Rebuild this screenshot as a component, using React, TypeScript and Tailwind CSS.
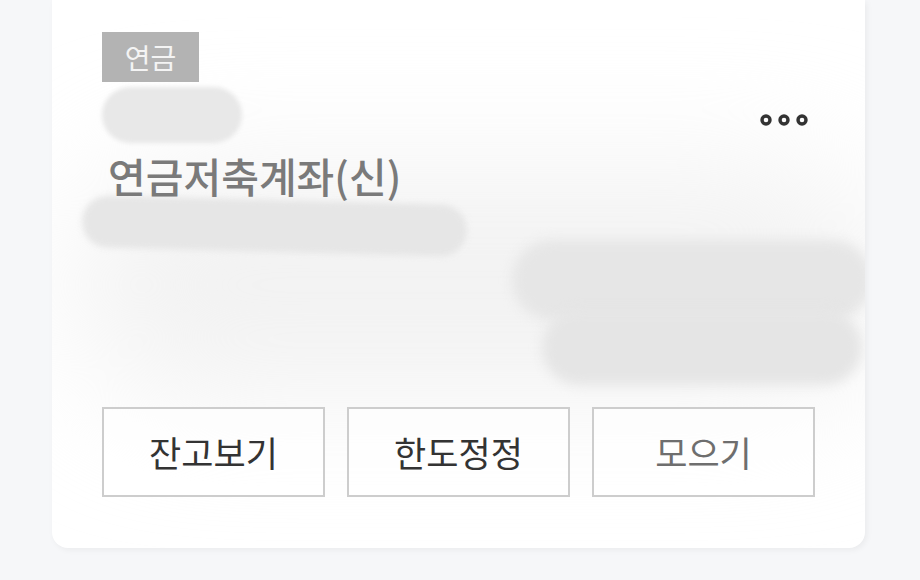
const KR = "font-['Noto_Sans_CJK_KR','Noto_Sans',sans-serif]";

function MoreDots() {
  return (
    <svg width="50" height="14" viewBox="0 0 50 14" aria-hidden>
      {[7, 25, 43].map((cx) => (
        <circle key={cx} cx={cx} cy="7" r="4" fill="none" stroke="#333" strokeWidth="3.4" />
      ))}
    </svg>
  );
}

const actions = [
  { label: "잔고보기", muted: false },
  { label: "한도정정", muted: false },
  { label: "모으기", muted: true },
];

export default function App() {
  return (
    <div className={`h-[580px] w-[920px] overflow-hidden bg-[#f6f7f9] ${KR}`}>
      <div className="relative ml-[52px] flex h-[548px] w-[813px] flex-col overflow-hidden rounded-b-[16px] bg-white px-[50px] pb-[51px] shadow-[2px_2px_6px_rgba(0,0,0,0.05)]">
        {/* soft redaction haze */}
        <div className="pointer-events-none absolute left-[20px] top-[170px] h-[230px] w-[820px] rounded-full bg-[#f2f2f2] blur-3xl" />
        <div className="pointer-events-none absolute left-[30px] top-[200px] h-[52px] w-[385px] rotate-[1.5deg] rounded-full bg-[#e6e6e6] blur-[3px]" />
        <div className="pointer-events-none absolute left-[460px] top-[240px] h-[80px] w-[360px] rounded-[40px] bg-[#e6e6e6] blur-[6px]" />
        <div className="pointer-events-none absolute left-[490px] top-[310px] h-[75px] w-[320px] rounded-[40px] bg-[#e5e5e5] blur-[6px]" />

        <div className="relative mt-[32px] flex h-[50px] w-[97px] items-center justify-center bg-[#b3b3b3] text-[28px] leading-none text-[#f4f4f4]">
          연금
        </div>

        <div className="relative flex h-[72px] items-center justify-between">
          <div className="-mt-[6px] h-[56px] w-[140px] rounded-full bg-[#e8e8e8] blur-[2px]" />
          <div className="mr-[6px] mt-[4px]">
            <MoreDots />
          </div>
        </div>

        <div className="relative -mt-[2px] pl-[6px] text-[41px] font-medium leading-[46px] text-[#7a7a7a]">
          연금저축계좌(신)
        </div>

        <div className="relative mt-auto grid grid-cols-3 gap-[22px]">
          {actions.map((a) => (
            <button
              key={a.label}
              type="button"
              className={`flex h-[90px] items-center justify-center border-2 border-[#cdcdcd] bg-white/60 text-[35px] ${
                a.muted ? "text-[#6e6e6e]" : "text-[#333]"
              }`}
            >
              {a.label}
            </button>
          ))}
        </div>
      </div>
    </div>
  );
}
